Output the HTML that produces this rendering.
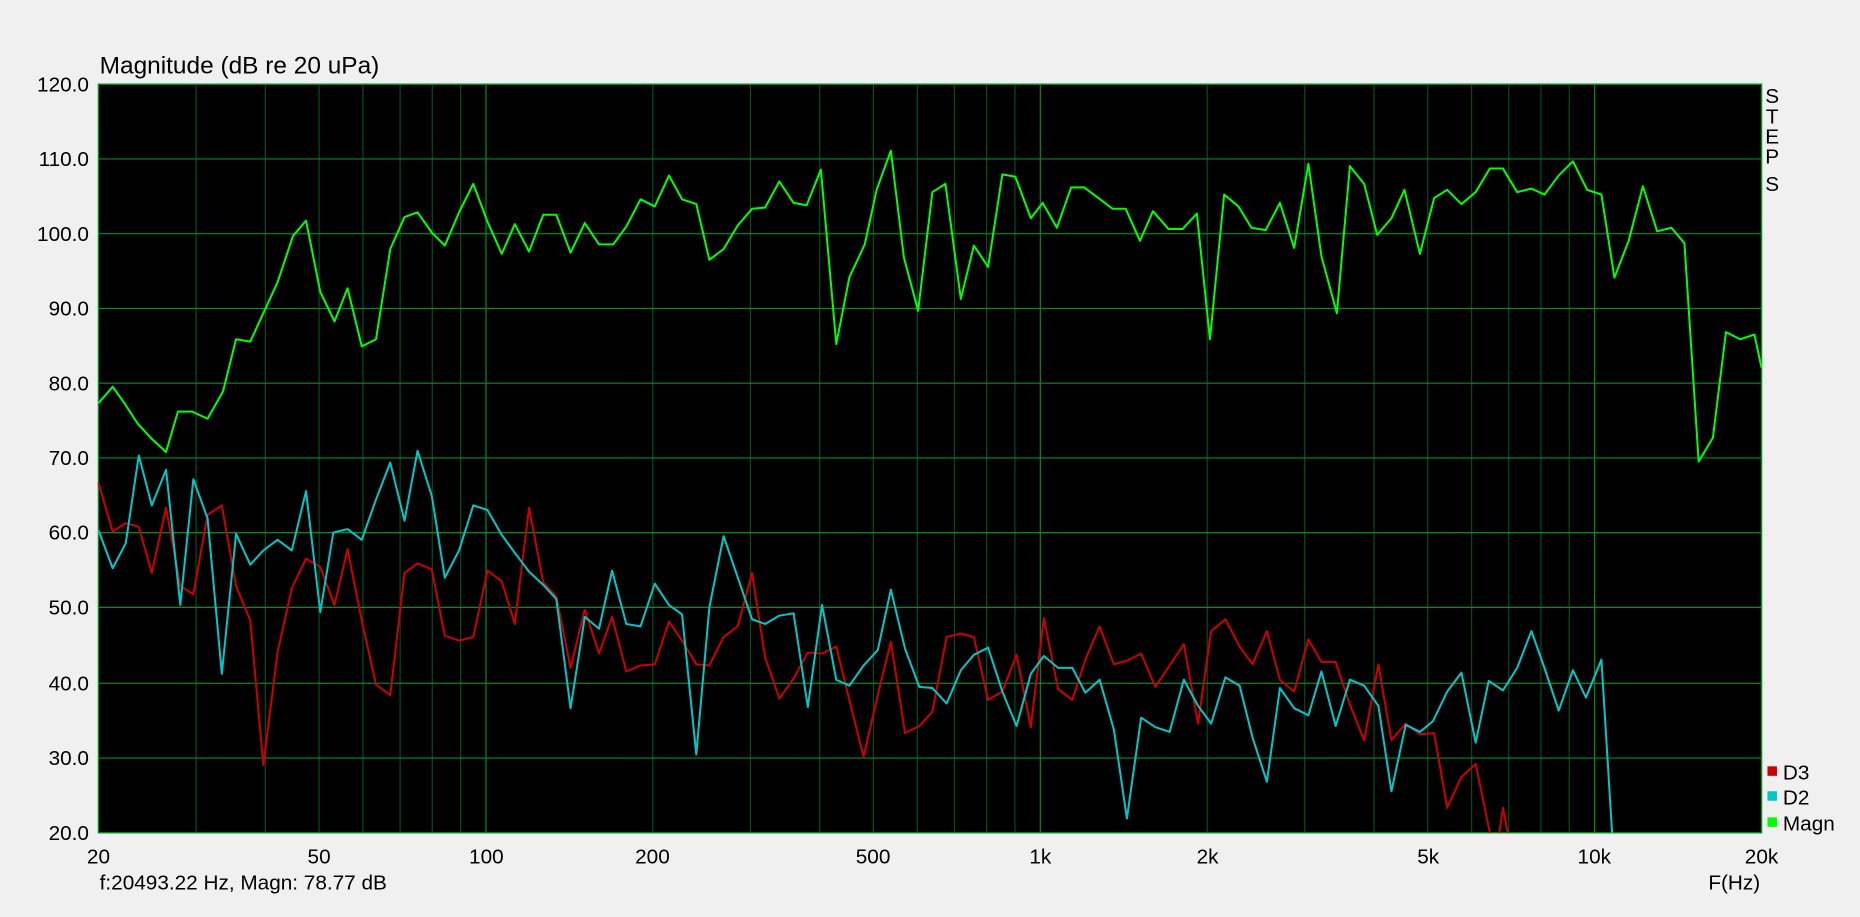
<!DOCTYPE html>
<html><head><meta charset="utf-8"><style>
html,body{margin:0;padding:0;background:#f0f0f0;width:1860px;height:917px;overflow:hidden}
svg{display:block}
text{font-family:"Liberation Sans",Arial,sans-serif;font-size:17.5px;fill:#000}
</style></head><body>
<svg width="1860" height="917" viewBox="0 0 1568 773" preserveAspectRatio="none">
<rect x="0" y="0" width="1568" height="773" fill="#f0f0f0"/>
<rect x="83" y="71" width="1402" height="631" fill="#000"/>
<g stroke="#00501a" stroke-width="1">
<line x1="165.3" y1="71" x2="165.3" y2="702"/><line x1="223.7" y1="71" x2="223.7" y2="702"/><line x1="269" y1="71" x2="269" y2="702"/><line x1="306" y1="71" x2="306" y2="702"/><line x1="337.3" y1="71" x2="337.3" y2="702"/><line x1="364.4" y1="71" x2="364.4" y2="702"/><line x1="388.3" y1="71" x2="388.3" y2="702"/>
<line x1="550.3" y1="71" x2="550.3" y2="702"/><line x1="632.6" y1="71" x2="632.6" y2="702"/><line x1="691" y1="71" x2="691" y2="702"/><line x1="736.3" y1="71" x2="736.3" y2="702"/><line x1="773.3" y1="71" x2="773.3" y2="702"/><line x1="804.6" y1="71" x2="804.6" y2="702"/><line x1="831.7" y1="71" x2="831.7" y2="702"/><line x1="855.6" y1="71" x2="855.6" y2="702"/>
<line x1="1017.7" y1="71" x2="1017.7" y2="702"/><line x1="1099.9" y1="71" x2="1099.9" y2="702"/><line x1="1158.3" y1="71" x2="1158.3" y2="702"/><line x1="1203.6" y1="71" x2="1203.6" y2="702"/><line x1="1240.6" y1="71" x2="1240.6" y2="702"/><line x1="1271.9" y1="71" x2="1271.9" y2="702"/><line x1="1299" y1="71" x2="1299" y2="702"/><line x1="1322.9" y1="71" x2="1322.9" y2="702"/>
</g>
<g stroke="#009020" stroke-width="1">
<line x1="409.7" y1="71" x2="409.7" y2="702"/><line x1="877" y1="71" x2="877" y2="702"/><line x1="1344.3" y1="71" x2="1344.3" y2="702"/>
<line x1="83" y1="134" x2="1485" y2="134"/><line x1="83" y1="197" x2="1485" y2="197"/><line x1="83" y1="260" x2="1485" y2="260"/><line x1="83" y1="323" x2="1485" y2="323"/><line x1="83" y1="386" x2="1485" y2="386"/><line x1="83" y1="449" x2="1485" y2="449"/><line x1="83" y1="512" x2="1485" y2="512"/><line x1="83" y1="576" x2="1485" y2="576"/><line x1="83" y1="639" x2="1485" y2="639"/>
</g>
<rect x="83" y="71" width="1402" height="631" fill="none" stroke="#009020" stroke-width="1.2"/>
<g fill="none" stroke-width="1.7" stroke-linejoin="round">
<polyline stroke="#cc0000" points="83,407 95,448 106,441 117,444 128,483 140,428 152,494 163,501 175,434 187,426 199,494 211,523 222,645 234,550 246,496 258,471 270,478 282,510 293,463 305,523 317,577 329,586 341,483 352,475 364,480 375,536 387,540 399,537 411,481 423,490 434,526 446,428 458,491 469,503 481,563 493,514 505,551 516,520 528,566 540,561 552,560 564,524 575,540 587,560 598,561 610,537 622,528 634,483 645,554 657,589 669,572 681,550 693,551 705,545 716,590 728,638 740,586 751,541 763,618 775,612 786,600 798,537 810,534 821,537 833,590 845,583 857,552 869,613 880,521 892,581 904,590 915,556 927,528 939,560 950,557 962,551 974,579 986,561 998,543 1010,610 1021,532 1033,522 1045,545 1056,560 1068,532 1079,573 1091,583 1103,539 1114,558 1126,558 1138,594 1150,624 1162,560 1173,624 1185,610 1197,619 1209,618 1220,681 1232,655 1244,644 1256,702"/>
<polyline stroke="#cc0000" points="1264,702 1267,681 1271,702"/>
<polyline stroke="#00c8c8" points="83,447 95,479 106,458 117,384 128,426 140,396 152,510 163,404 175,437 187,568 199,450 211,476 222,464 234,455 246,464 258,414 270,516 281,449 293,446 305,455 317,421 329,390 341,439 352,380 364,418 375,487 387,464 399,426 411,430 423,451 434,466 446,482 458,493 469,505 481,597 493,520 505,530 516,481 528,526 540,528 552,492 564,510 575,518 587,636 598,512 610,452 622,487 634,522 645,526 657,519 669,517 681,596 693,510 705,573 716,578 728,561 740,548 751,497 763,547 775,579 786,580 798,593 810,565 821,552 833,546 845,583 857,612 869,568 880,553 892,563 904,563 915,584 927,573 939,615 950,690 962,605 974,613 986,617 998,573 1010,595 1021,610 1033,571 1045,578 1056,622 1068,659 1079,580 1091,597 1103,603 1114,566 1126,612 1138,573 1150,578 1162,595 1173,667 1185,611 1197,617 1208,608 1220,583 1232,567 1244,626 1255,574 1267,582 1279,563 1291,532 1302,563 1314,599 1326,565 1337,588 1350,556 1359,702"/>
<polyline stroke="#00ff00" points="83,340 95,326 105,340 116,357 128,370 140,381 150,347 162,347 175,353 188,330 199,286 211,288 222,264 234,238 247,199 258,186 270,246 282,271 293,243 305,292 317,286 329,210 341,183 352,179 364,196 375,207 387,179 399,155 411,187 423,214 434,189 446,212 458,181 469,181 481,213 493,188 505,206 517,206 528,191 540,168 552,174 564,148 575,168 587,172 598,219 610,210 622,190 634,176 645,175 657,153 669,171 680,173 692,143 705,290 716,234 729,206 739,160 751,127 762,217 774,262 786,162 797,155 810,252 821,207 833,225 845,147 856,149 869,184 879,171 891,192 903,158 914,158 926,167 938,176 949,176 961,203 972,178 985,193 997,193 1009,180 1020,286 1032,164 1044,174 1055,192 1067,194 1079,171 1091,209 1103,138 1114,216 1127,264 1138,140 1150,155 1161,198 1173,184 1184,160 1197,214 1209,167 1220,160 1232,172 1244,162 1256,142 1267,142 1279,162 1291,159 1302,164 1314,148 1326,136 1338,160 1350,164 1361,234 1373,203 1385,157 1397,195 1409,192 1420,205 1432,389 1444,369 1455,280 1467,286 1479,282 1485,310"/>
</g>
<text x="84" y="62" style="font-size:20.6px">Magnitude (dB re 20 uPa)</text>
<g text-anchor="end">
<text x="75" y="77">120.0</text><text x="75" y="140">110.0</text><text x="75" y="203">100.0</text><text x="75" y="266">90.0</text><text x="75" y="329">80.0</text><text x="75" y="392">70.0</text><text x="75" y="455">60.0</text><text x="75" y="518">50.0</text><text x="75" y="582">40.0</text><text x="75" y="645">30.0</text><text x="75" y="708">20.0</text>
</g>
<g text-anchor="middle">
<text x="83" y="728">20</text><text x="269" y="728">50</text><text x="410" y="728">100</text><text x="550" y="728">200</text><text x="736" y="728">500</text><text x="877" y="728">1k</text><text x="1018" y="728">2k</text><text x="1204" y="728">5k</text><text x="1344" y="728">10k</text><text x="1485" y="728">20k</text>
<text x="1462" y="750">F(Hz)</text>
<text x="1494" y="87">S</text><text x="1494" y="104">T</text><text x="1494" y="121">E</text><text x="1494" y="138">P</text><text x="1494" y="161">S</text>
</g>
<text x="84" y="750">f:20493.22 Hz, Magn: 78.77 dB</text>
<rect x="1490" y="646" width="8" height="8" fill="#cc0000"/><text x="1503" y="657">D3</text>
<rect x="1490" y="667" width="8" height="8" fill="#00c8c8"/><text x="1503" y="678">D2</text>
<rect x="1490" y="689" width="8" height="8" fill="#00ff00"/><text x="1503" y="700">Magn</text>
</svg>
</body></html>
